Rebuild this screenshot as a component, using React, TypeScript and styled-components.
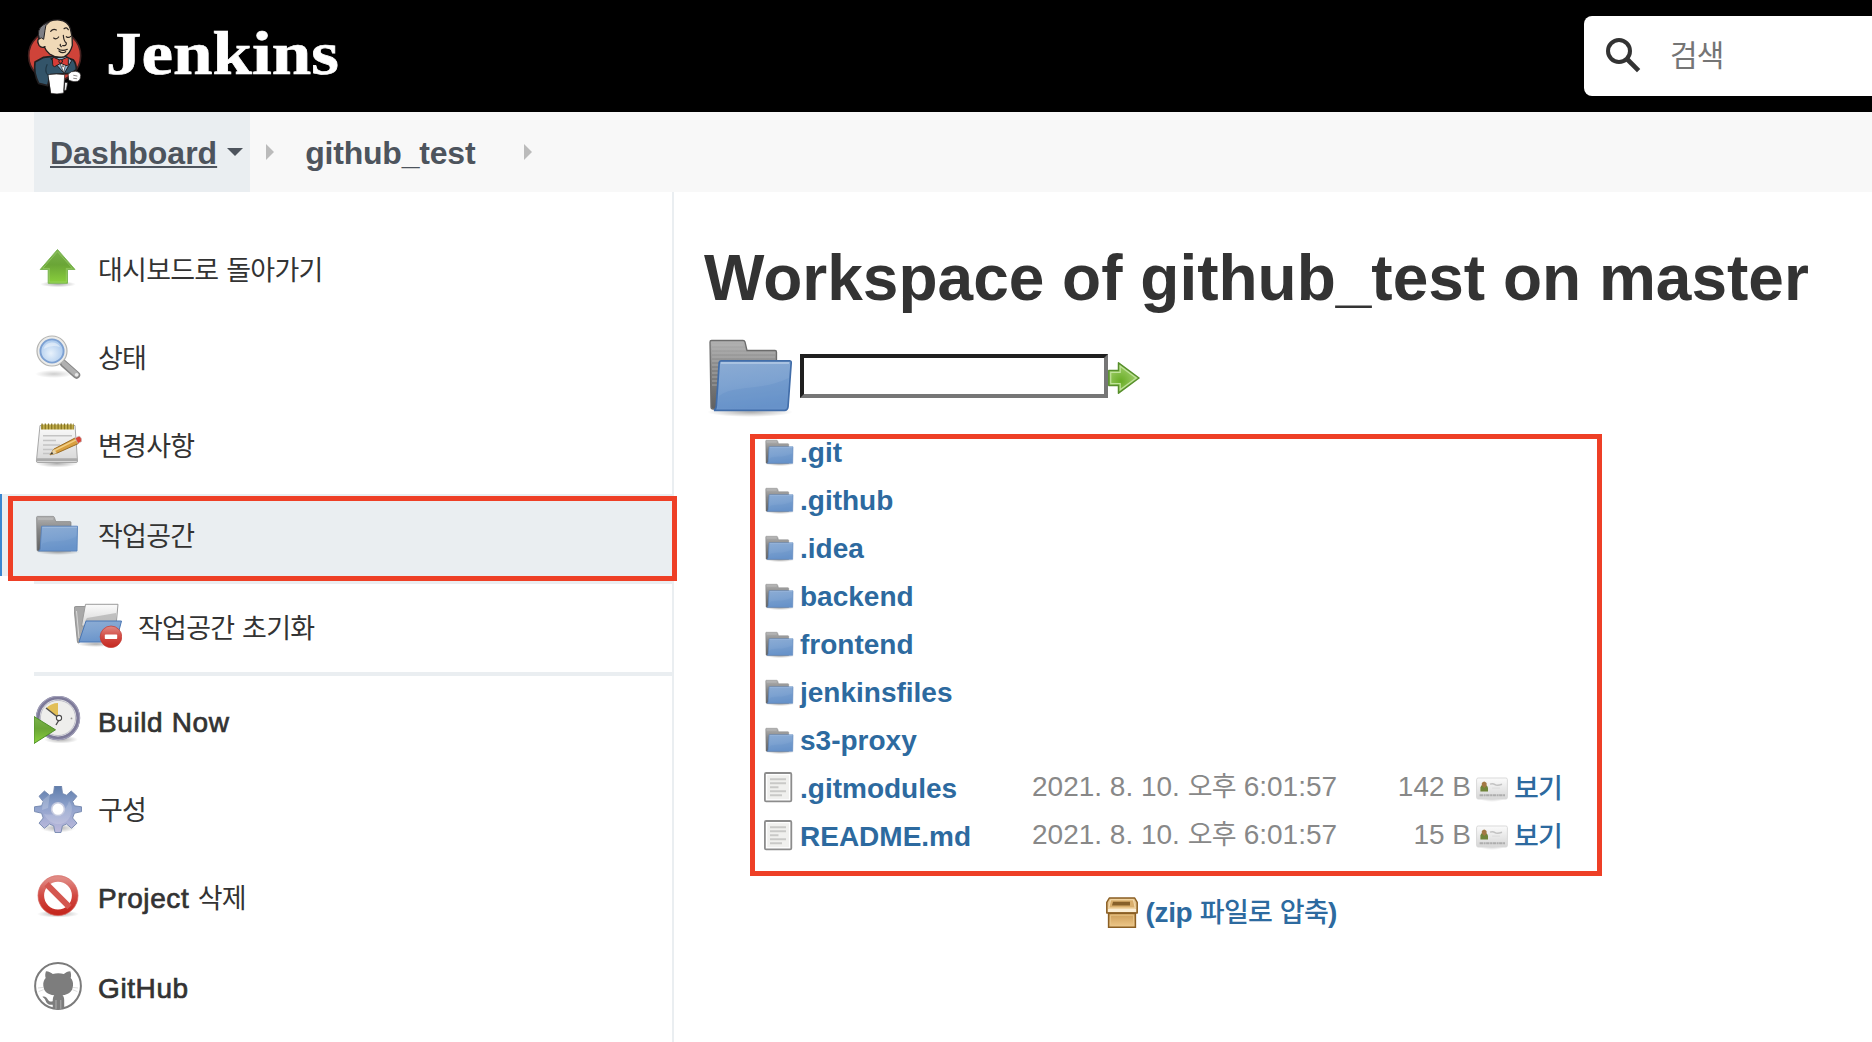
import React from 'react';
import styled, { createGlobalStyle } from 'styled-components';

const latin = "'Liberation Sans', Arial, 'Noto Sans CJK KR', sans-serif";

const GlobalStyle = createGlobalStyle`
  html, body { margin: 0; padding: 0; background: #fff; overflow: hidden; }
  * { box-sizing: border-box; }
  svg { display: block; flex: none; }
`;

/* ---------- layout ---------- */

const Page = styled.div`
  display: flex;
  flex-direction: column;
  width: 100%;
  height: 1042px;
  overflow: hidden;
  background: #fff;
  color: #333;
  font-family: ${latin};
  font-size: 28px;
`;

const Header = styled.header`
  display: flex;
  flex: none;
  align-items: center;
  justify-content: space-between;
  height: 112px;
  padding-left: 27px;
  background: #000;
`;

const Brand = styled.a`
  display: flex;
  align-items: center;
  gap: 23px;
`;

const Wordmark = styled.span`
  margin-bottom: 6px;
  color: #fff;
  font: bold 62px/72px 'Liberation Serif', 'Times New Roman', serif;
  transform: scaleX(1.145);
  transform-origin: left center;
  -webkit-text-stroke: 0.7px #fff;
`;

const Search = styled.label`
  display: flex;
  align-items: center;
  width: 288px;
  height: 80px;
  padding-left: 21px;
  gap: 29px;
  background: #fff;
  border-radius: 8px 0 0 8px;
  color: #757575;
  line-height: 48px;
`;

const Crumbs = styled.nav`
  display: flex;
  flex: none;
  align-items: center;
  height: 80px;
  padding-left: 34px;
  background: #f8f8f8;
  color: #4d545d;
  font-size: 32px;
  font-weight: bold;
  line-height: 80px;
`;

const Crumb = styled.a<{ $active?: boolean }>`
  display: flex;
  align-items: center;
  height: 80px;
  padding: ${p => (p.$active ? '0 7px 0 16px' : '0 49px 0 31px')};
  gap: 10px;
  background: ${p => (p.$active ? '#eaeef1' : 'transparent')};
`;

const CrumbText = styled.span<{ $underline?: boolean }>`
  height: 37px;
  margin-top: 2px;
  line-height: 37px;
  letter-spacing: ${p => (p.$underline ? '0' : '-0.2px')};
  text-decoration: ${p => (p.$underline ? 'underline' : 'none')};
  text-decoration-thickness: 2px;
  text-underline-offset: 2px;
  text-decoration-skip-ink: none;
`;

const CaretDown = styled.i`
  border: 8px solid transparent;
  border-top-color: #4d545d;
  border-bottom: 0;
`;

const Separator = styled.i<{ $lead?: number }>`
  margin-left: ${p => p.$lead ?? 0}px;
  border: 8px solid transparent;
  border-left-color: #bbb;
  border-right: 0;
`;

const Body = styled.div`
  display: flex;
  flex: 1;
  min-height: 0;
`;

const Sidebar = styled.aside`
  flex: none;
  width: 674px;
  padding-top: 32px;
  border-right: 2px solid #eaeef1;
`;

const Task = styled.a<{ $height?: number }>`
  display: flex;
  gap: 16px;
  height: ${p => p.$height ?? 88}px;
  padding: 20px 0 0 34px;
`;

const ActiveTask = styled(Task)`
  position: relative;
  height: 82px;
  margin: 6px 0 4px;
  padding: 16px 0 0 32px;
  border-left: 2px solid #3b86d0;
  background: #eaeef1;
`;

const SubTasks = styled.div`
  margin-left: 34px;
  height: 96px;
  padding: 18px 0 0 40px;
  border: 4px solid #eaeef1;
  border-width: 4px 0;
  display: flex;
  gap: 16px;
`;

const TaskLabel = styled.span<{ $drop?: number }>`
  margin-top: ${p => p.$drop ?? 3}px;
  height: 48px;
  line-height: 48px;
  letter-spacing: 0.6px;
  white-space: nowrap;
  -webkit-text-stroke: 0.7px #333;
`;

const Ko = styled.span<{ $size?: number; $weight?: number }>`
  font-size: ${p => p.$size ?? 27}px;
  font-weight: ${p => p.$weight ?? 400};
  line-height: 1;
  letter-spacing: -0.75px;
  word-spacing: 1px;
  -webkit-text-stroke: 0;
`;

const Main = styled.main`
  flex: 1;
  min-width: 0;
  padding: 54px 0 0 30px;
`;

const Title = styled.h1`
  margin: 0 0 18px;
  font-size: 64px;
  font-weight: bold;
  line-height: 64px;
  white-space: nowrap;
`;

const PathBar = styled.form`
  display: flex;
  align-items: flex-start;
  height: 100px;
`;

const PathInput = styled.input`
  width: 308px;
  height: 44px;
  margin-top: 26px;
  padding: 0;
  border: 4px solid;
  border-color: #1f1f1f #767676 #767676 #1f1f1f;
  border-radius: 0;
  background: #fff;
`;

const GoButton = styled.span`
  margin-top: 34px;
`;

const FileList = styled.div`
  position: relative;
  margin-left: 60px;
`;

const FileRow = styled.div`
  display: grid;
  grid-template-columns: 36px 232px 305px 134px 1fr;
  grid-template-rows: 48px;
  align-items: center;
  height: 48px;
  line-height: 46px;
  white-space: nowrap;
`;

const FileLink = styled.a`
  padding-top: 2px;
  color: #2d6a9f;
  font-weight: bold;
`;

const Meta = styled.span`
  padding-bottom: 2px;
  color: #888;
  text-align: left;
`;

const Size = styled(Meta)`
  text-align: right;
`;

const View = styled.a`
  display: flex;
  align-items: center;
  gap: 6px;
  height: 48px;
  padding-left: 5px;
  color: #2d6a9f;
`;

const ViewText = styled.span`
  padding-top: 2px;
`;

const ZipRow = styled.a`
  display: flex;
  align-items: center;
  justify-content: flex-end;
  gap: 8px;
  width: 573px;
  height: 48px;
  margin-top: 28px;
  color: #2d6a9f;
  font-weight: bold;
  line-height: 48px;
`;

const ZipText = styled.span`
  margin-top: 2px;
  letter-spacing: -0.35px;
`;

const Marker = styled.div<{ $x: number; $y: number; $w: number; $h: number }>`
  position: absolute;
  z-index: 2;
  left: ${p => p.$x}px;
  top: ${p => p.$y}px;
  width: ${p => p.$w}px;
  height: ${p => p.$h}px;
  border: 5px solid #ee3f26;
  pointer-events: none;
`;

const HiddenDefs = styled.svg`
  position: absolute;
`;

/* ---------- icons ---------- */

const Defs = () => (
  <HiddenDefs width="0" height="0">
    <defs>
      <linearGradient id="fback" x1="0" y1="0" x2="0" y2="1">
        <stop offset="0" stopColor="#b2b2b2" />
        <stop offset=".4" stopColor="#868686" />
        <stop offset="1" stopColor="#606060" />
      </linearGradient>
      <linearGradient id="ffront" x1="0" y1="0" x2=".2" y2="1">
        <stop offset="0" stopColor="#8cacd4" />
        <stop offset=".5" stopColor="#7ea3d1" />
        <stop offset="1" stopColor="#6b95cb" />
      </linearGradient>
      <linearGradient id="paper" x1="0" y1="0" x2="0" y2="1">
        <stop offset="0" stopColor="#fbfbfb" />
        <stop offset="1" stopColor="#d6d6d6" />
      </linearGradient>
      <linearGradient id="green" x1="0" y1="0" x2="0" y2="1">
        <stop offset="0" stopColor="#7bb24c" />
        <stop offset=".45" stopColor="#6aa536" />
        <stop offset="1" stopColor="#8ad03c" />
      </linearGradient>
      <radialGradient id="goGreen" cx=".4" cy=".6" r=".6">
        <stop offset="0" stopColor="#69ad26" />
        <stop offset="1" stopColor="#a5d172" />
      </radialGradient>
      <radialGradient id="lens" cx=".45" cy=".6" r=".6">
        <stop offset="0" stopColor="#e8f2fc" />
        <stop offset="1" stopColor="#a9c8ec" />
      </radialGradient>
      <linearGradient id="gear" x1="0" y1="0" x2="0" y2="1">
        <stop offset="0" stopColor="#5f7dab" />
        <stop offset=".45" stopColor="#8fa2cc" />
        <stop offset="1" stopColor="#bfbbdd" />
      </linearGradient>
      <linearGradient id="red" x1="0" y1="0" x2="0" y2="1">
        <stop offset="0" stopColor="#e08a84" />
        <stop offset=".5" stopColor="#d24a43" />
        <stop offset="1" stopColor="#c5281f" />
      </linearGradient>
      <linearGradient id="boxFront" x1="0" y1="0" x2="0" y2="1">
        <stop offset="0" stopColor="#c99a55" />
        <stop offset="1" stopColor="#f0c98a" />
      </linearGradient>
      <radialGradient id="shade">
        <stop offset="0" stopColor="#000" stopOpacity=".32" />
        <stop offset="1" stopColor="#000" stopOpacity="0" />
      </radialGradient>
    </defs>
  </HiddenDefs>
);

const SearchIcon = () => (
  <svg width="36" height="36" viewBox="0 0 36 36" fill="none" stroke="#333">
    <circle cx="14" cy="13" r="11" strokeWidth="4" />
    <path d="M22.5 21.5 33.6 32.6" strokeWidth="4.6" />
  </svg>
);

const Folder = ({ size = 48 }: { size?: number }) =>
  size === 96 ? (
    <svg width="96" height="96" viewBox="1 0 96 96">
      <ellipse cx="47" cy="84" rx="43" ry="5" fill="url(#shade)" />
      <path d="M7 14Q7 12.5 8.5 12.5H40Q41.6 12.5 42 14L44 22.5H72Q73.5 22.5 73.5 24V81H10Q8 81 8 79Z" fill="url(#fback)" stroke="#6c6c6c" strokeWidth="1.3" />
      <path d="M9 17H40M9 21H42M9 25H72M9 29H72M9 33H17M9 37H17M9 41H16M9 45H16M9 49H16M9 53H15M9 57H15" stroke="#b9b9b9" strokeWidth="1" opacity=".65" />
      <path d="M18 32.8H86.5Q88.3 32.8 88.2 34.6L85 79Q84.6 82.4 81.5 82.4H11Q13 81.6 13.3 78L16.2 34.6Q16.4 32.8 18 32.8Z" fill="url(#ffront)" stroke="#416da9" strokeWidth="1.7" />
      <path d="M18 35H86" stroke="#b5cbe6" strokeWidth="1.5" />
      <path d="M16 68C32 56 56 64 86 50L83 80.5H15Z" fill="#5f8cc6" opacity=".28" />
    </svg>
  ) : (
    <svg width={size} height={size} viewBox="0 0 48 48">
      <ellipse cx="24" cy="42" rx="22" ry="3" fill="url(#shade)" />
      <path d="M2.6 7.4Q2.6 6.4 3.6 6.4H19Q20 6.4 20.4 7.4L21.8 11.6H36Q37 11.6 37 12.6V41H4Q3 41 3 40Z" fill="url(#fback)" stroke="#828282" strokeWidth=".7" />
      <path d="M4 9H19" stroke="#cdcdcd" strokeWidth="1" opacity=".7" />
      <path d="M7.6 16.2H43.5L43 41H4.6Q6 40.4 6.2 39Z" fill="url(#ffront)" stroke="#5882bb" strokeWidth=".9" />
      <path d="M8.4 17.3H43" stroke="#a4bfe0" strokeWidth=".8" />
      <path d="M8 34C16 29 30 34 43 26L42 40.6H7.6Z" fill="#5f8cc6" opacity=".22" />
    </svg>
  );

const UpArrow = () => (
  <svg width="48" height="48" viewBox="0 0 48 48">
    <ellipse cx="24" cy="40.2" rx="18" ry="3" fill="url(#shade)" />
    <path d="M23.5 5.5 41 25.5H33.5V39.3H14.2V25.5H6.2Z" fill="url(#green)" stroke="#7fb758" strokeWidth="1" />
    <path d="M23.5 7.6 38.4 24.4H32.3V38H15.4V24.4H8.8Z" fill="none" stroke="#a4d475" strokeWidth=".8" opacity=".7" />
  </svg>
);

const Magnifier = () => (
  <svg width="48" height="48" viewBox="0 0 48 48">
    <ellipse cx="20" cy="42" rx="19" ry="4" fill="url(#shade)" opacity=".6" />
    <path d="M29.5 31.5 42.5 43" stroke="#858585" strokeWidth="7.4" strokeLinecap="round" />
    <path d="M30 31.5 42.5 42.7" stroke="#b0b0b0" strokeWidth="5" strokeLinecap="round" />
    <circle cx="42.6" cy="42.8" r="1.8" fill="#e8e8e8" />
    <circle cx="18" cy="19" r="15" fill="#ececea" stroke="#b4b4b2" strokeWidth="1.2" />
    <circle cx="18" cy="19" r="11.6" fill="url(#lens)" stroke="#7ca0d2" strokeWidth="1.9" />
    <path d="M9.5 17A9 9 0 0 1 26 15Q18 12 9.5 17Z" fill="#fff" opacity=".45" />
  </svg>
);

const Notepad = () => (
  <svg width="48" height="48" viewBox="0 0 48 48">
    <ellipse cx="23" cy="43.5" rx="21" ry="4" fill="url(#shade)" />
    <path d="M6 5.5H41L43.5 41Q43.6 42.5 42 42.5H4Q2.3 42.5 2.4 41Z" fill="url(#paper)" stroke="#a8a8a8" strokeWidth="1" />
    <path d="M3 39.6H43.2" stroke="#aaa" strokeWidth="2.6" />
    <path d="M7 7H40" stroke="#c2ae4c" strokeWidth="5" />
    <path d="M7.5 6.4H40" stroke="#857425" strokeWidth="5.6" strokeDasharray="1.2 2" />
    <path d="M9 15.8H38M9 20.5H22M9 25H26M9 29.5H21M9 33.5H17" stroke="#c4c4c4" strokeWidth="1.5" />
    <path d="M16 34.8 20 29 41 18 44.5 23.5 22.8 33.2Z" fill="#d9a040" stroke="#93641c" strokeWidth=".9" />
    <path d="M20.5 30.5 42 19.8" stroke="#f2cf85" strokeWidth="1.4" />
    <path d="M16 34.8 20 29 22.8 33.2Z" fill="#e9d6ab" />
    <path d="M16 34.8 18 32 19.3 33.6Z" fill="#333" />
    <path d="M41 18 45.2 16Q48 17.5 47.6 21.4L44 23.6Z" fill="#db4438" stroke="#c9c9c9" strokeWidth=".7" />
  </svg>
);

const FolderDelete = () => (
  <svg width="48" height="48" viewBox="0 0 48 48">
    <ellipse cx="22" cy="42" rx="19" ry="3" fill="url(#shade)" />
    <path d="M0 6Q0 4.5 2 4.5H13L16 9 5 41Q3.4 41.5 3.3 39Z" fill="#a8a8a8" stroke="#858585" strokeWidth=".8" />
    <path d="M2.5 9 5 36" stroke="#d8d8d8" strokeWidth="1" />
    <path d="M11.5 2.3H44L42 24H7.5Z" fill="url(#paper)" stroke="#9b9b9b" strokeWidth="1" />
    <path d="M12 5H41M13 16 42 11V19H11Z" fill="#b5b5b5" opacity=".8" />
    <path d="M12 19H47.5L42 40H5Z" fill="url(#ffront)" stroke="#4b77b4" strokeWidth="1" />
    <circle cx="37" cy="34.8" r="10.8" fill="url(#red)" stroke="#c33a32" strokeWidth=".7" />
    <rect x="30.8" y="32.4" width="12.4" height="4.6" rx=".7" fill="#fff" />
  </svg>
);

const BuildNow = () => (
  <svg width="48" height="48" viewBox="0 0 48 48">
    <ellipse cx="27" cy="43.5" rx="17" ry="4" fill="url(#shade)" />
    <circle cx="24" cy="22" r="20.3" fill="#eeeeec" stroke="#7d7a99" strokeWidth="3.8" />
    <circle cx="24" cy="22" r="21.6" fill="none" stroke="#a9a8bf" strokeWidth=".9" />
    <circle cx="24" cy="22" r="17.6" fill="none" stroke="#bdbdc8" strokeWidth="1" />
    <path d="M12 12.5Q17 7 24 7V21Z" fill="#e2bf58" />
    <path d="M12 12 26 23M27 20.5 22 29" fill="none" stroke="#4e4e4e" strokeWidth="1.4" />
    <circle cx="25" cy="22" r="2.6" fill="#fff" stroke="#4a4a4a" strokeWidth="1.1" />
    <circle cx="37.5" cy="22.4" r=".9" fill="#999" />
    <path d="M0 20.5 21.5 33.8 0 47.5Z" fill="url(#green)" stroke="#4f902a" strokeWidth="1" />
  </svg>
);

const Gear = () => (
  <svg width="48" height="48" viewBox="0 0 48 48">
    <ellipse cx="24" cy="42" rx="18" ry="4.5" fill="url(#shade)" />
    <path
      fill="url(#gear)" fillRule="evenodd" stroke="#7387ae" strokeWidth=".9" strokeLinejoin="round"
      d="M20.5 0H27.5L28.5 7.5 32.5 9.2 37.2 5 43 10.3 38.6 15.5 40.4 19.8 47.5 20.8V25.6L40.4 27.2 38.6 32 43 37.2 37.6 42.3 32.5 38 28.4 39.8 27 46.5H21L19.7 39.8 15.5 38 10.4 42.3 5 37.2 9.2 32 7.6 27.2.5 25.6V20.8L7.6 19.8 9.2 15.5 5 10.3 10.4 5 15.5 9.2 19.5 7.5ZM24 16.6A6.6 6.6 0 1 0 24 29.8 6.6 6.6 0 1 0 24 16.6Z"
    />
    <path d="M10 28C20 30 32 27 35 15 40 20 38 30 33 35 26 41 14 38 10 28Z" fill="#fff" opacity=".16" />
    <path d="M9 14 16 8 14 22 8 24Z" fill="#fff" opacity=".2" />
    <circle cx="24" cy="23.2" r="6.4" fill="#fff" stroke="#c6cbe0" strokeWidth="1.6" />
  </svg>
);

const Forbidden = () => (
  <svg width="48" height="48" viewBox="0 0 48 48">
    <ellipse cx="24" cy="40" rx="21" ry="3.6" fill="url(#shade)" />
    <circle cx="24" cy="21.6" r="17" fill="#fff" stroke="url(#red)" strokeWidth="6.2" />
    <path d="M12.5 10.1 35.5 33.1" stroke="#d45750" strokeWidth="6" />
    <circle cx="24" cy="21.6" r="20" fill="none" stroke="#d9716b" strokeWidth=".7" />
  </svg>
);

const Octocat = () => (
  <svg width="48" height="48" viewBox="0 0 48 48">
    <circle cx="24" cy="24" r="22.9" fill="#fff" stroke="#7b7b7b" strokeWidth="2" />
    <path
      fill="#7d7d7d"
      d="M12 9.3C15 9.4 17 10.8 18.8 11.9 22 11 26.5 11 29.8 11.9 31.8 10.6 33.6 9.4 36.3 9.3 37.2 11.8 37.3 14 36.7 16 38.6 18 39.3 20.5 39 23.5 38.5 30 34.5 32.6 28.5 33.2 29.8 34.5 30.2 36 30.2 38V46.5L24 47.5 18.7 46.5V42.7C14 43.4 12.6 41.2 11.6 38.8 11 37.2 10 36 8.4 34.8 11 33.8 13 36 14.2 38 15.3 39.7 17 39.8 18.7 39.2 18.8 36.6 19 34.6 20.2 33.2 13.7 32.6 9.8 30 9.3 23.5 9 20.5 9.9 18 11.7 16 11 14 11.1 11.8 12 9.3Z"
    />
    <path d="M22 38V46.8M26.8 38V46.8" stroke="#b4b4b4" strokeWidth=".9" />
    <path d="M4 26 9 25.4M4.6 29.6 9.6 27.6M44 26 39 25.4M43.4 29.6 38.4 27.6" stroke="#c6c6c6" strokeWidth=".6" />
  </svg>
);

const GoArrow = () => (
  <svg width="32" height="32" viewBox="0 0 32 32">
    <path d="M.8 8.6H10.5V.8L31 16 10.5 31.2V23.4H.8Z" fill="url(#goGreen)" stroke="#578f2c" strokeWidth="1.5" strokeLinejoin="round" />
    <path d="M2.7 10.3H12.2V4.2L28.2 16 12.2 27.8V21.7H2.7Z" fill="none" stroke="#c0e29b" strokeWidth="1.2" />
  </svg>
);

const TextFile = () => (
  <svg width="32" height="32" viewBox="0 0 32 32">
    <rect x=".9" y="1" width="26.4" height="28.4" rx="1.2" fill="#fff" stroke="#8c8c8c" strokeWidth="1.8" />
    <rect x="3.2" y="3.2" width="21.8" height="24" fill="#f0f0ee" />
    <path d="M6 7.2H22M6 11.3H22M6 15.2H14.5M6 19.3H22M6 23.2H18" stroke="#c9c9c7" strokeWidth="1.9" />
  </svg>
);

const ViewCard = () => (
  <svg width="32" height="32" viewBox="0 0 32 32">
    <ellipse cx="16" cy="27" rx="12" ry="3" fill="url(#shade)" opacity=".5" />
    <rect x=".6" y="6" width="30.8" height="21" rx="1.6" fill="url(#paper)" stroke="#d9d9d9" />
    <path d="M4.4 19.4V15.4Q4.9 13.1 6.4 12.9H9.5Q12 13.6 12 16.1V19.4Z" fill="#70853a" />
    <path d="M5.8 13.6V11.1Q8.2 8 10.6 11.1V14.1L8.2 16Z" fill="#a37844" />
    <path d="M14 12.1Q17 11.1 19 12.6T26 12.3" fill="none" stroke="#c2c2c2" strokeWidth="1.5" />
    <path d="M16 16.1H24" stroke="#dcdcdc" strokeWidth="1" />
    <path d="M3.6 23.2H29" stroke="#adadad" strokeWidth="2" strokeDasharray="3.4 .6 2 .5" />
  </svg>
);

const ZipBox = () => (
  <svg width="32" height="32" viewBox="0 0 32 32">
    <path d="M3.3 2H28.7L31.2 6.4V17H.8V6.4Z" fill="#e6c48d" stroke="#8a5f24" strokeWidth="1.5" strokeLinejoin="round" />
    <path d="M4.6 3.8H27.4L29.2 12H2.8Z" fill="#d9ae6c" stroke="#f5dcae" strokeWidth="1" />
    <path d="M7 5.8H24V9.4H6Z" fill="#87602a" />
    <path d="M2 12.8H30V16H2Z" fill="#fbeed5" />
    <path d="M2.6 17.2H29.4V31.2H2.6Z" fill="url(#boxFront)" stroke="#8a5f24" strokeWidth="1.5" />
    <path d="M4.4 19.2H27.6V29.4H4.4Z" fill="none" stroke="#e8c58a" strokeWidth=".9" />
  </svg>
);

const JenkinsLogo = () => (
  <svg width="56" height="77" viewBox="20 20 168 231">
    <ellipse cx="103" cy="133" rx="78" ry="76" fill="#cf4339" stroke="#43201f" strokeWidth="5" />
    <g stroke="#221f20" strokeWidth="5" strokeLinejoin="round" strokeLinecap="round">
      <path d="M70 138 44 152Q39 185 55 216L82 223 90 190 152 186 168 175Q168 155 158 145L120 132Z" fill="#335469" />
      <path d="M92 143 132 186 154 148 140 136Z" fill="#8fb2d0" strokeWidth="3" />
      <path d="M120 158 130 184 136 158Z" fill="#fff" strokeWidth="2" />
      <path d="M56 84Q50 55 70 40 90 24 117 26 143 29 150 52 157 75 156 102 150 126 132 136 108 142 88 128 76 118 73 108 56 104 53 92Z" fill="#f0d9b7" strokeWidth="4" />
      <path d="M57 82Q48 55 68 41L88 31Q72 42 74 57L70 84Q63 76 57 82Z" fill="#7d7e84" strokeWidth="3" />
      <path d="M56 82Q49 86 56 102 64 112 74 106" fill="#f0d9b7" strokeWidth="4" />
      <path d="M96 142Q96 137 102 139L120 147 140 138Q145 138 144 144V161Q142 165 136 162L121 156 103 166Q97 166 97 160Z" fill="#d83c37" strokeWidth="3" />
      <circle cx="121" cy="150" r="5.5" fill="#d83c37" strokeWidth="3" />
      <path d="M144 188Q152 178 166 180 180 182 181 192 182 206 172 210 160 213 146 207Z" fill="#fff" strokeWidth="2" />
      <path d="M84 190Q108 186 133 190L130 245Q110 250 92 246Z" fill="#fff" strokeWidth="2" />
      <path d="M134 213 142 214 138 236 132 238Z" fill="#e6e6e6" strokeWidth="2" />
    </g>
    <g fill="none" stroke="#2b2522" strokeWidth="3.6" strokeLinecap="round">
      <path d="M91 60Q98 51 108 56M131 52Q139 46 144 55" />
      <path d="M100 80Q108 86 115 77M138 76Q145 81 151 75" />
      <path d="M129 72Q130 90 138 95 139 104 127 103M120 99Q118 103 123 106" />
      <path d="M112 111Q125 122 141 114M116 119Q126 128 136 121" />
      <path d="M160 192 170 194M160 201 169 202" strokeWidth="1.6" />
      <path d="M128 163V166" />
      <path d="M80 160Q72 180 82 190" stroke="#203745" />
    </g>
  </svg>
);

/* ---------- content ---------- */

const folders = ['.git', '.github', '.idea', 'backend', 'frontend', 'jenkinsfiles', 's3-proxy'];
const files = [
  { name: '.gitmodules', size: '142 B' },
  { name: 'README.md', size: '15 B' },
];

export default function App() {
  return (
    <Page>
      <GlobalStyle />
      <Defs />
      <Header>
        <Brand>
          <JenkinsLogo />
          <Wordmark>Jenkins</Wordmark>
        </Brand>
        <Search>
          <SearchIcon />
          <Ko $size={30}>검색</Ko>
        </Search>
      </Header>
      <Crumbs>
        <Crumb $active>
          <CrumbText $underline>Dashboard</CrumbText>
          <CaretDown />
        </Crumb>
        <Separator $lead={16} />
        <Crumb><CrumbText>github_test</CrumbText></Crumb>
        <Separator />
      </Crumbs>
      <Body>
        <Sidebar>
          <Task><UpArrow /><TaskLabel><Ko>대시보드로 돌아가기</Ko></TaskLabel></Task>
          <Task><Magnifier /><TaskLabel><Ko>상태</Ko></TaskLabel></Task>
          <Task><Notepad /><TaskLabel><Ko>변경사항</Ko></TaskLabel></Task>
          <ActiveTask>
            <Folder />
            <TaskLabel><Ko>작업공간</Ko></TaskLabel>
            <Marker $x={6} $y={2} $w={669} $h={85} />
          </ActiveTask>
          <SubTasks>
            <FolderDelete />
            <TaskLabel><Ko>작업공간 초기화</Ko></TaskLabel>
          </SubTasks>
          <Task $height={90}><BuildNow /><TaskLabel>Build Now</TaskLabel></Task>
          <Task><Gear /><TaskLabel $drop={1}><Ko>구성</Ko></TaskLabel></Task>
          <Task><Forbidden /><TaskLabel $drop={1}>Project <Ko>삭제</Ko></TaskLabel></Task>
          <Task><Octocat /><TaskLabel>GitHub</TaskLabel></Task>
        </Sidebar>
        <Main>
          <Title>Workspace of github_test on master</Title>
          <PathBar>
            <Folder size={96} />
            <PathInput type="text" />
            <GoButton><GoArrow /></GoButton>
          </PathBar>
          <FileList>
            {folders.map(name => (
              <FileRow key={name}>
                <Folder size={32} />
                <FileLink>{name}</FileLink>
              </FileRow>
            ))}
            {files.map(file => (
              <FileRow key={file.name}>
                <TextFile />
                <FileLink>{file.name}</FileLink>
                <Meta>2021. 8. 10. <Ko>오후</Ko> 6:01:57</Meta>
                <Size>{file.size}</Size>
                <View><ViewCard /><ViewText><Ko $weight={500}>보기</Ko></ViewText></View>
              </FileRow>
            ))}
            <ZipRow>
              <ZipBox />
              <ZipText>(zip <Ko $weight={500}>파일로 압축</Ko>)</ZipText>
            </ZipRow>
            <Marker $x={-14} $y={6} $w={852} $h={442} />
          </FileList>
        </Main>
      </Body>
    </Page>
  );
}
